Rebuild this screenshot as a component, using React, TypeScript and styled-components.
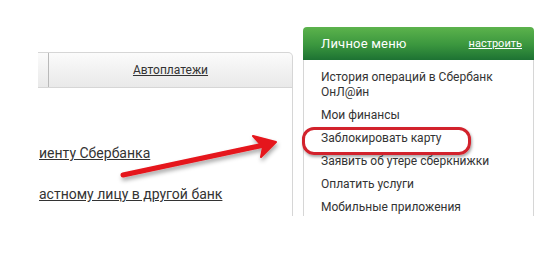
import React from "react";
import styled, { createGlobalStyle } from "styled-components";

const Global = createGlobalStyle`
  html, body { margin: 0; padding: 0; background: #fff; }
  body { font-family: Roboto, "Liberation Sans", sans-serif; color: #333; }
  * { box-sizing: border-box; }
`;

const Page = styled.div`
  position: relative;
  width: 556px;
  height: 256px;
  overflow: hidden;
  display: flex;
  align-items: flex-start;
  padding-top: 27px;
`;

const LeftColumn = styled.div`
  margin-left: 38px;
  margin-top: 25px;
  width: 255px;
  display: flex;
  flex-direction: column;
`;

const TabBar = styled.div`
  height: 36px;
  display: flex;
  border-top: 1px solid #d6d6d6;
  border-bottom: 1px solid #d6d6d6;
  border-right: 1px solid #d6d6d6;
  border-top-right-radius: 5px;
  background: linear-gradient(#fbfbfb, #e9e9e9);
`;

const TabStub = styled.div`
  width: 11px;
  border-right: 1px solid #b9b9b9;
`;

const Tab = styled.a`
  flex: 1;
  display: flex;
  align-items: center;
  justify-content: center;
  font-size: 12px;
  color: #333;
  text-decoration: underline;
  padding-bottom: 1px;
`;

const Content = styled.div`
  height: 128px;
  border-right: 1px solid #d6d6d6;
  display: flex;
  flex-direction: column;
  padding-top: 56px;
  gap: 22px;
`;

const TransferLink = styled.a`
  font-size: 14px;
  line-height: 19px;
  color: #333;
  text-decoration: underline;
  white-space: nowrap;
  margin-left: 1px;
`;

const Panel = styled.div`
  margin-left: 10px;
  width: 231px;
  display: flex;
  flex-direction: column;
`;

const PanelHeader = styled.div`
  height: 33px;
  border-radius: 4px 4px 0 0;
  background: linear-gradient(#5cb34c, #3a963e 55%, #1d7233);
  display: flex;
  align-items: center;
  justify-content: space-between;
  padding: 0 12px 0 18px;
  color: #fff;
`;

const PanelTitle = styled.span`
  font-size: 13px;
  letter-spacing: 0.2px;
`;

const Configure = styled.a`
  font-size: 11px;
  color: #fff;
  text-decoration: underline;
`;

const MenuList = styled.div`
  height: 156px;
  border-left: 1px solid #d6d6d6;
  border-right: 1px solid #d6d6d6;
  padding: 6px 0 0 17px;
  display: flex;
  flex-direction: column;
`;

const MenuItem = styled.div<{ $marked?: boolean }>`
  position: relative;
  font-size: 12px;
  line-height: 15px;
  padding: 4px 0;
  color: #333;
  ${(p) =>
    p.$marked &&
    `
    &::after {
      content: "";
      position: absolute;
      left: -19px;
      top: 0px;
      width: 163px;
      height: 22px;
      border: 3px solid #d2222c;
      border-radius: 12px;
      box-shadow: 1px 2px 3px rgba(0,0,0,0.35);
    }
  `}
`;

const ArrowOverlay = styled.svg`
  position: absolute;
  left: 0;
  top: 0;
  pointer-events: none;
`;

export default function App() {
  return (
    <>
      <Global />
      <Page>
        <LeftColumn>
          <TabBar>
            <TabStub />
            <Tab>Автоплатежи</Tab>
          </TabBar>
          <Content>
            <TransferLink>иенту Сбербанка</TransferLink>
            <TransferLink>астному лицу в другой банк</TransferLink>
          </Content>
        </LeftColumn>
        <Panel>
          <PanelHeader>
            <PanelTitle>Личное меню</PanelTitle>
            <Configure>настроить</Configure>
          </PanelHeader>
          <MenuList>
            <MenuItem>
              История операций в Сбербанк
              <br />
              ОнЛ@йн
            </MenuItem>
            <MenuItem>Мои финансы</MenuItem>
            <MenuItem $marked>Заблокировать карту</MenuItem>
            <MenuItem>Заявить об утере сберкнижки</MenuItem>
            <MenuItem>Оплатить услуги</MenuItem>
            <MenuItem>Мобильные приложения</MenuItem>
          </MenuList>
        </Panel>
        <ArrowOverlay width="556" height="256" viewBox="0 0 556 256">
          <defs>
            <filter id="sh" x="-20%" y="-50%" width="140%" height="200%">
              <feDropShadow dx="1" dy="3" stdDeviation="2" floodColor="#000" floodOpacity="0.35" />
            </filter>
          </defs>
          <g filter="url(#sh)">
            <path d="M123 175 L264 145" stroke="#e5141b" strokeWidth="5" strokeLinecap="round" fill="none" />
            <path d="M253 136 L276 142 L261 157 L263 147 Z" fill="#e5141b" stroke="#e5141b" strokeWidth="2" strokeLinejoin="round" />
          </g>
        </ArrowOverlay>
      </Page>
    </>
  );
}
